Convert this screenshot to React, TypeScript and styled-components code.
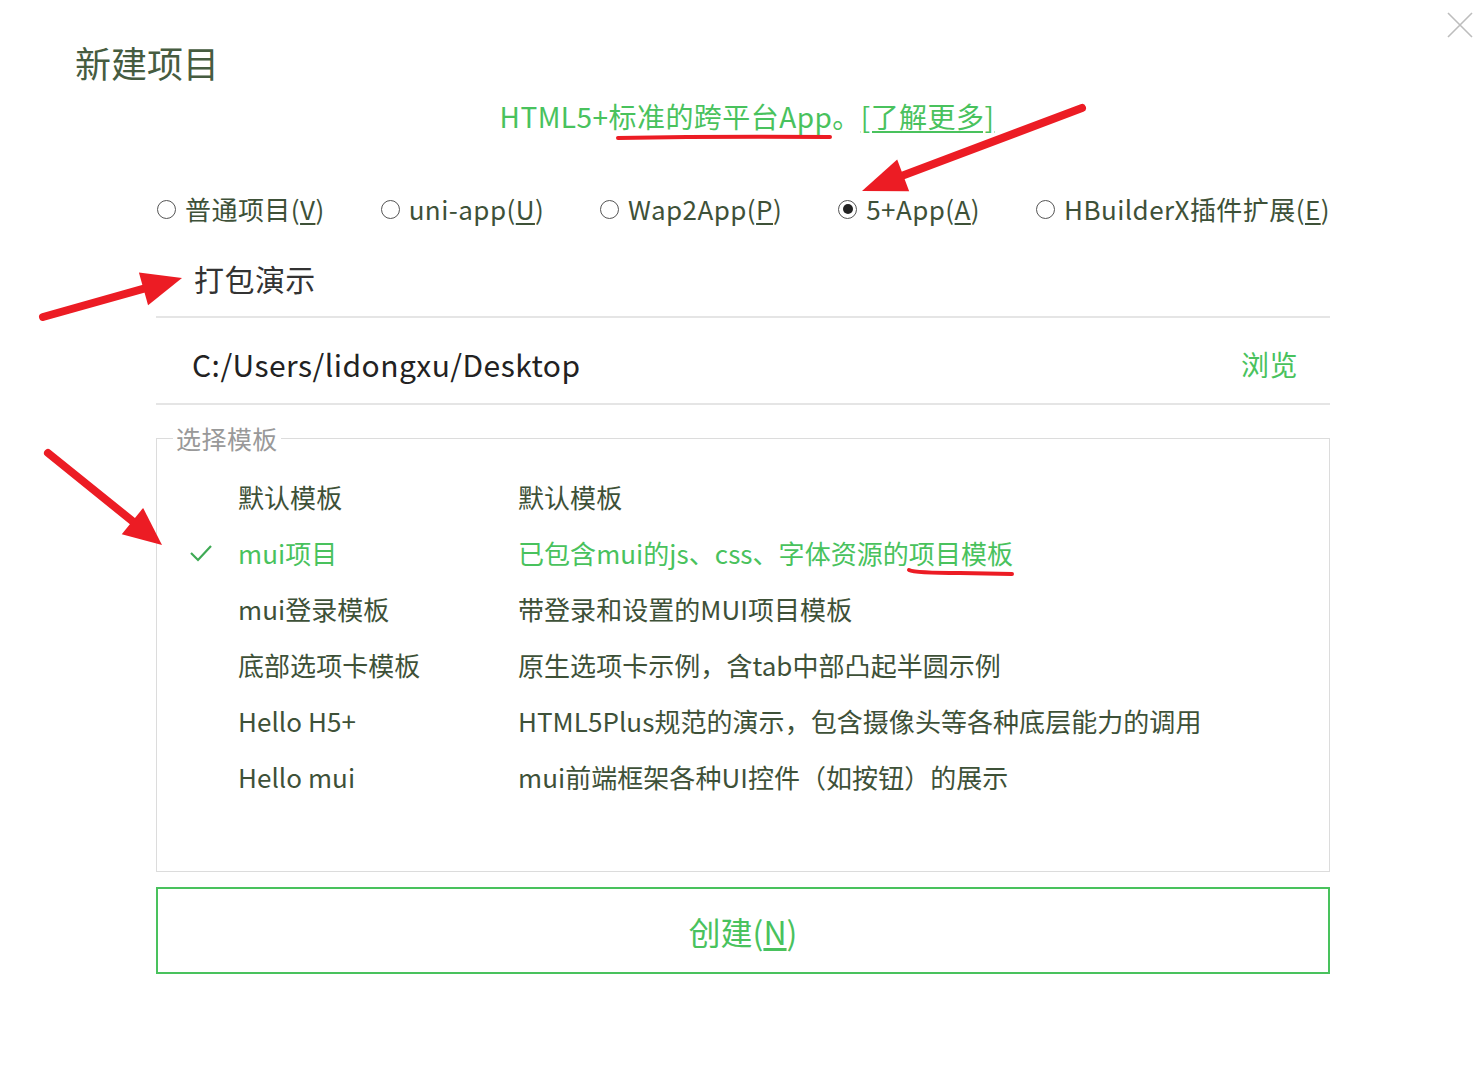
import React from "react";
import styled, { createGlobalStyle } from "styled-components";

const GREEN = "#49c25d";
const TEXT = "#3e5138";
const FONT = `"Noto Sans CJK SC", "Noto Sans", sans-serif`;

const Global = createGlobalStyle`
  html, body { margin: 0; padding: 0; background: #fff; }
  body { font-family: ${FONT}; color: ${TEXT}; letter-spacing: 0.45px; }
`;

const Page = styled.div`
  position: relative;
  width: 1481px;
  height: 1073px;
  overflow: hidden;
  background: #fff;
`;

const CloseBtn = styled.button`
  position: absolute;
  top: 10px;
  right: 6px;
  width: 30px;
  height: 30px;
  padding: 0;
  border: 0;
  background: transparent;
  display: flex;
  align-items: center;
  justify-content: center;
`;

const Title = styled.h1`
  margin: 0;
  padding: 41px 0 0 75px;
  font-size: 36px;
  line-height: 42px;
  font-weight: 400;
  letter-spacing: 0;
  color: #465c40;
`;

const Content = styled.div`
  width: 1174px;
  margin-left: 156px;
  display: flex;
  flex-direction: column;
`;

const Intro = styled.div`
  text-align: center;
  font-size: 28px;
  line-height: 36px;
  color: ${GREEN};
  margin-top: 15px;
  padding-left: 8px;
`;

const LearnMore = styled.a`
  color: ${GREEN};
  text-decoration: underline;
  text-underline-offset: 3px;
`;

const RadioRow = styled.div`
  display: flex;
  justify-content: space-between;
  align-items: center;
  margin-top: 57px;
  padding-left: 1px;
  height: 36px;
`;

const RadioItem = styled.label`
  display: flex;
  align-items: center;
  font-size: 26px;
  line-height: 36px;
  color: ${TEXT};
  white-space: nowrap;
`;

const RadioCircle = styled.span<{ $checked?: boolean }>`
  box-sizing: border-box;
  width: 19px;
  height: 19px;
  border-radius: 50%;
  border: 1.2px solid #555;
  margin-right: 9px;
  display: flex;
  align-items: center;
  justify-content: center;
  &::after {
    content: "";
    display: ${(p) => (p.$checked ? "block" : "none")};
    width: 10px;
    height: 10px;
    border-radius: 50%;
    background: #222;
  }
`;

const Key = styled.span`
  text-decoration: underline;
  text-underline-offset: 3px;
`;

const NameField = styled.div`
  padding: 33px 0 20px 38px;
  font-size: 30px;
  line-height: 36px;
  color: #333;
  border-bottom: 2px solid #e5e5e5;
`;

const PathField = styled.div`
  display: flex;
  align-items: center;
  justify-content: space-between;
  padding: 28px 32px 21px 36px;
  border-bottom: 2px solid #e5e5e5;
`;

const PathText = styled.span`
  font-size: 30px;
  line-height: 36px;
  color: #222;
`;

const Browse = styled.span`
  font-size: 28px;
  line-height: 36px;
  color: ${GREEN};
`;

const TemplateBox = styled.fieldset`
  margin: 18px 0 0;
  padding: 16px 0 66px;
  border: 1px solid #dcdcdc;
  min-width: 0;
`;

const Legend = styled.legend`
  margin-left: 16px;
  padding: 0 3px;
  font-size: 25px;
  line-height: 30px;
  color: #999;
`;

const TemplateRow = styled.div<{ $active?: boolean }>`
  display: grid;
  grid-template-columns: 81px 280px 1fr;
  align-items: center;
  height: 56px;
  font-size: 26px;
  line-height: 36px;
  letter-spacing: 0.05px;
  color: ${(p) => (p.$active ? GREEN : TEXT)};
`;

const CheckCell = styled.span`
  display: flex;
  align-items: center;
  padding-left: 32px;
`;

const CreateButton = styled.button`
  margin-top: 15px;
  height: 87px;
  border: 2px solid ${GREEN};
  background: #fff;
  font-family: ${FONT};
  font-size: 32px;
  color: ${GREEN};
  display: flex;
  align-items: center;
  justify-content: center;
`;

const Overlay = styled.svg`
  position: absolute;
  left: 0;
  top: 0;
  pointer-events: none;
`;

type P = [number, number];

function Arrow({ tail, tip, len, half }: { tail: P; tip: P; len: number; half: number }) {
  const dx = tip[0] - tail[0];
  const dy = tip[1] - tail[1];
  const d = Math.hypot(dx, dy);
  const ux = dx / d;
  const uy = dy / d;
  const bx = tip[0] - ux * len;
  const by = tip[1] - uy * len;
  const nx = -uy;
  const ny = ux;
  const pts = `${tip[0]},${tip[1]} ${bx + nx * half},${by + ny * half} ${bx - nx * half},${by - ny * half}`;
  const sx = tip[0] - ux * (len - 6);
  const sy = tip[1] - uy * (len - 6);
  return (
    <g>
      <line x1={tail[0]} y1={tail[1]} x2={sx} y2={sy} stroke="#ec1c24" strokeWidth={8} strokeLinecap="round" />
      <polygon points={pts} fill="#ec1c24" />
    </g>
  );
}

const templates = [
  { name: "默认模板", desc: "默认模板" },
  { name: "mui项目", desc: "已包含mui的js、css、字体资源的项目模板", active: true },
  { name: "mui登录模板", desc: "带登录和设置的MUI项目模板" },
  { name: "底部选项卡模板", desc: "原生选项卡示例，含tab中部凸起半圆示例" },
  { name: "Hello H5+", desc: "HTML5Plus规范的演示，包含摄像头等各种底层能力的调用" },
  { name: "Hello mui", desc: "mui前端框架各种UI控件（如按钮）的展示" },
];

export default function App() {
  return (
    <>
      <Global />
      <Page>
        <CloseBtn aria-label="close">
          <svg width="28" height="28" viewBox="0 0 28 28">
            <path d="M2 2 L26 26 M26 2 L2 26" stroke="#bdbdbd" strokeWidth="1.6" fill="none" />
          </svg>
        </CloseBtn>
        <Title>新建项目</Title>
        <Content>
          <Intro>
            HTML5+标准的跨平台App。<LearnMore>[了解更多]</LearnMore>
          </Intro>
          <RadioRow>
            <RadioItem>
              <RadioCircle />
              普通项目(<Key>V</Key>)
            </RadioItem>
            <RadioItem>
              <RadioCircle />
              uni-app(<Key>U</Key>)
            </RadioItem>
            <RadioItem>
              <RadioCircle />
              Wap2App(<Key>P</Key>)
            </RadioItem>
            <RadioItem>
              <RadioCircle $checked />
              5+App(<Key>A</Key>)
            </RadioItem>
            <RadioItem>
              <RadioCircle />
              HBuilderX插件扩展(<Key>E</Key>)
            </RadioItem>
          </RadioRow>
          <NameField>打包演示</NameField>
          <PathField>
            <PathText>C:/Users/lidongxu/Desktop</PathText>
            <Browse>浏览</Browse>
          </PathField>
          <TemplateBox>
            <Legend>选择模板</Legend>
            {templates.map((t) => (
              <TemplateRow key={t.name} $active={t.active}>
                <CheckCell>
                  {t.active && (
                    <svg width="24" height="20" viewBox="0 0 24 20">
                      <path d="M2 10 L9 17 L22 3" stroke="#3faa55" strokeWidth="2.2" fill="none" />
                    </svg>
                  )}
                </CheckCell>
                <span>{t.name}</span>
                <span>{t.desc}</span>
              </TemplateRow>
            ))}
          </TemplateBox>
          <CreateButton>
            创建(<Key>N</Key>)
          </CreateButton>
        </Content>
        <Overlay width="1481" height="1073" viewBox="0 0 1481 1073">
          <path d="M618 138 Q720 136 830 137" stroke="#ec1c24" strokeWidth="4" fill="none" strokeLinecap="round" />
          <path d="M909 570 Q915 573 960 573 L1012 574" stroke="#ec1c24" strokeWidth="4" fill="none" strokeLinecap="round" />
          <Arrow tail={[1082, 108]} tip={[862, 191]} len={44} half={17} />
          <Arrow tail={[43, 317]} tip={[182, 278]} len={40} half={17} />
          <Arrow tail={[48, 453]} tip={[162, 545]} len={38} half={17} />
        </Overlay>
      </Page>
    </>
  );
}
